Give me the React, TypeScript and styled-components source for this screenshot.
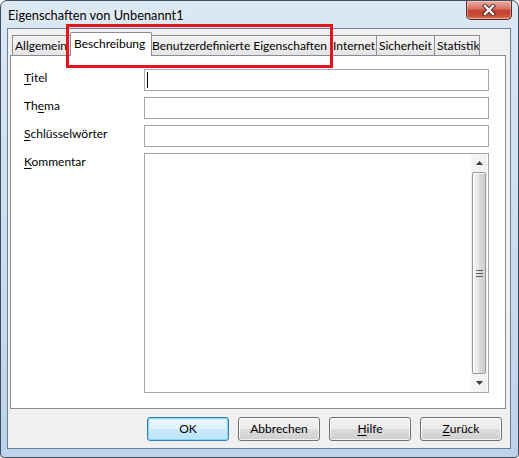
import React from "react";
import styled, { createGlobalStyle, css } from "styled-components";

const GlobalStyle = createGlobalStyle`
  html, body { margin: 0; padding: 0; background: #ffffff; }
  body { width: 519px; height: 458px; overflow: hidden; }
  * { box-sizing: border-box; }
`;

const FONT = `Lato, "Noto Sans", "Liberation Sans", sans-serif`;

const Window = styled.div`
  position: relative;
  width: 519px;
  height: 458px;
  display: flex;
  flex-direction: column;
  border: 1px solid #3f4d5c;
  border-radius: 7px 7px 4px 4px;
  background: linear-gradient(180deg, #dce8f4 0%, #d3e3f3 20%, #c9dcef 60%, #bcd3eb 100%);
  font-family: ${FONT};
  font-size: 12px;
  color: #000;
  overflow: hidden;
`;

const TitleBar = styled.div`
  height: 27px;
  flex: none;
  display: flex;
  align-items: center;
  padding-left: 7px;
`;

const TitleText = styled.div`
  font-size: 12.8px;
  line-height: 16px;
  color: #000;
  text-shadow: 0 0 6px rgba(255, 255, 255, 0.9);
`;

const CloseButton = styled.div`
  align-self: flex-start;
  margin-left: auto;
  margin-right: 6px;
  width: 46px;
  height: 19px;
  border: 1px solid #5b2a26;
  border-top: none;
  border-radius: 0 0 5px 5px;
  background: linear-gradient(180deg, #e9a99c 0%, #d87a6b 40%, #c3402f 55%, #c9503c 85%, #e08a6a 100%);
  box-shadow: inset 0 0 0 1px rgba(255, 255, 255, 0.35);
  display: flex;
  align-items: center;
  justify-content: center;
`;

const Client = styled.div`
  flex: 1;
  margin: 0 7px 8px 6px;
  border: 1px solid #6f7f91;
  background: #f0f0f0;
  padding: 3px 4px 7px 2px;
  display: flex;
  flex-direction: column;
`;

const TabStrip = styled.div`
  height: 24px;
  flex: none;
  display: flex;
  align-items: flex-end;
  padding-left: 2px;
  margin-bottom: -1px;
  position: relative;
  z-index: 1;
`;

const Tab = styled.div<{ $w: number; $active?: boolean }>`
  width: ${(p) => p.$w}px;
  flex: none;
  height: 20px;
  margin-bottom: 1px;
  margin-right: -1px;
  border: 1px solid #898c95;
  border-bottom: none;
  background: linear-gradient(180deg, #f4f4f4 0%, #eeeeee 50%, #e4e4e4 100%);
  padding-left: 2px;
  line-height: 19px;
  white-space: nowrap;
  overflow: hidden;
  position: relative;
  ${(p) =>
    p.$active &&
    css`
      width: ${p.$w + 4}px;
      height: 24px;
      margin: 0 -3px 0 -2px;
      background: #ffffff;
      z-index: 2;
      border-radius: 2px 2px 0 0;
      line-height: 21px;
      padding-left: 3px;
    `}
`;

const Panel = styled.div`
  flex: 1;
  background: #ffffff;
  border: 1px solid #898c95;
  padding: 13px 16px 0 13px;
`;

const Form = styled.div`
  display: grid;
  grid-template-columns: 120px 1fr;
  row-gap: 6px;
`;

const Label = styled.div`
  line-height: 16px;
  margin-top: 1px;
  align-self: start;
  white-space: nowrap;
`;

const Mn = styled.span`
  text-decoration: underline;
  text-underline-offset: 2px;
`;

const Field = styled.div`
  height: 22px;
  border: 1px solid #a7a7a7;
  background: #fff;
  padding: 2px 0 0 2px;
`;

const Caret = styled.div`
  width: 1px;
  height: 16px;
  background: #000;
`;

const Memo = styled.div`
  height: 240px;
  border: 1px solid #a7a7a7;
  background: #fff;
  display: flex;
`;

const MemoBody = styled.div`
  flex: 1;
`;

const ScrollBar = styled.div`
  width: 16px;
  display: flex;
  flex-direction: column;
  background: #eeeeee;
  margin-right: 1px;
`;

const ArrowButton = styled.div`
  height: 18px;
  flex: none;
  display: flex;
  align-items: center;
  justify-content: center;
  background: linear-gradient(90deg, #f7f7f7, #efefef);
`;

const Thumb = styled.div`
  flex: 1;
  margin: 0 1px;
  border: 1px solid #9b9b9b;
  border-radius: 2px;
  background: linear-gradient(90deg, #f5f5f5 0%, #e8e8e8 45%, #d9d9d9 55%, #cfcfcf 100%);
  box-shadow: inset 1px 1px 0 rgba(255, 255, 255, 0.8);
  display: flex;
  align-items: center;
  justify-content: center;
`;

const ButtonRow = styled.div`
  margin-top: 8px;
  height: 24px;
  flex: none;
  display: flex;
  justify-content: flex-end;
  gap: 9px;
  padding-right: 4px;
`;

const Button = styled.div<{ $default?: boolean }>`
  width: 82px;
  height: 24px;
  border: 1px solid #707070;
  border-radius: 3px;
  background: linear-gradient(180deg, #f2f2f2 0%, #ebebeb 49%, #dddddd 50%, #cfcfcf 100%);
  box-shadow: inset 0 0 0 1px rgba(255, 255, 255, 0.75);
  display: flex;
  align-items: center;
  justify-content: center;
  line-height: 16px;
  ${(p) =>
    p.$default &&
    css`
      border-color: #3c7fb1;
      box-shadow: inset 0 0 0 1px #7fd3f5, inset 0 0 0 2px rgba(200, 238, 252, 0.7);
      background: linear-gradient(180deg, #eef7fd 0%, #e0f2fc 49%, #cbeafb 50%, #b8e0f6 100%);
    `}
`;

const Highlight = styled.div`
  position: absolute;
  left: 65px;
  top: 23px;
  width: 267px;
  height: 44px;
  border: 3px solid #e3141b;
  pointer-events: none;
  z-index: 10;
`;

const tabs = [
  { label: "Allgemein", w: 61 },
  { label: "Beschreibung", w: 78, active: true },
  { label: "Benutzerdefinierte Eigenschaften", w: 182 },
  { label: "Internet", w: 47 },
  { label: "Sicherheit", w: 59 },
  { label: "Statistik", w: 46 },
];

const UpArrow = () => (
  <svg width="7" height="4" viewBox="0 0 7 4">
    <path d="M0 4 L3.5 0 L7 4 Z" fill="#3c3c3c" />
  </svg>
);

const DownArrow = () => (
  <svg width="7" height="4" viewBox="0 0 7 4">
    <path d="M0 0 L3.5 4 L7 0 Z" fill="#3c3c3c" />
  </svg>
);

const Grip = () => (
  <svg width="7" height="7" viewBox="0 0 7 7">
    <path d="M0 0.5 H7 M0 3.5 H7 M0 6.5 H7" stroke="#5e5e5e" strokeWidth="1" />
  </svg>
);

const CloseGlyph = () => (
  <svg width="14" height="12" viewBox="0 0 14 12">
    <path d="M3 2 L11 10 M11 2 L3 10" stroke="#4a2320" strokeWidth="4.2" strokeLinecap="square" />
    <path d="M3 2 L11 10 M11 2 L3 10" stroke="#ffffff" strokeWidth="2.4" strokeLinecap="square" />
  </svg>
);

export default function App() {
  return (
    <>
      <GlobalStyle />
      <Window>
        <TitleBar>
          <TitleText>Eigenschaften von Unbenannt1</TitleText>
          <CloseButton>
            <CloseGlyph />
          </CloseButton>
        </TitleBar>
        <Client>
          <TabStrip>
            {tabs.map((t) => (
              <Tab key={t.label} $w={t.w} $active={t.active}>
                {t.label}
              </Tab>
            ))}
          </TabStrip>
          <Panel>
            <Form>
              <Label>
                <Mn>T</Mn>itel
              </Label>
              <Field>
                <Caret />
              </Field>
              <Label>
                Th<Mn>e</Mn>ma
              </Label>
              <Field />
              <Label>
                <Mn>S</Mn>chlüsselwörter
              </Label>
              <Field />
              <Label>
                <Mn>K</Mn>ommentar
              </Label>
              <Memo>
                <MemoBody />
                <ScrollBar>
                  <ArrowButton>
                    <UpArrow />
                  </ArrowButton>
                  <Thumb>
                    <Grip />
                  </Thumb>
                  <ArrowButton>
                    <DownArrow />
                  </ArrowButton>
                </ScrollBar>
              </Memo>
            </Form>
          </Panel>
          <ButtonRow>
            <Button $default>OK</Button>
            <Button>Abbrechen</Button>
            <Button>
              <Mn>H</Mn>ilfe
            </Button>
            <Button>
              <Mn>Z</Mn>urück
            </Button>
          </ButtonRow>
        </Client>
        <Highlight />
      </Window>
    </>
  );
}
